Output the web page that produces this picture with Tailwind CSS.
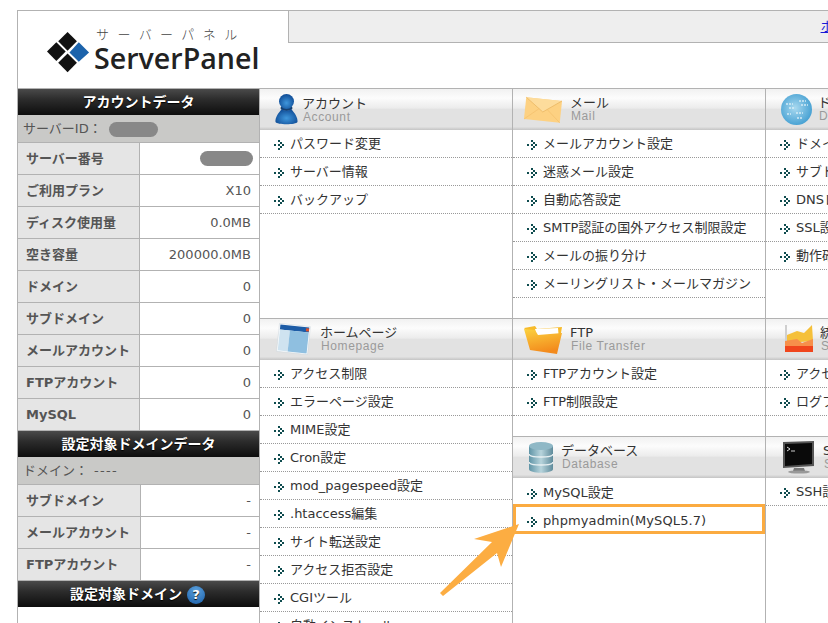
<!DOCTYPE html>
<html lang="ja">
<head>
    <meta charset="UTF-8">
    <title>ServerPanel</title>
    <script src="https://cdn.jsdelivr.net/npm/@tailwindcss/browser@4"></script>
</head>
<body class="w-[828px] h-[623px] overflow-hidden bg-white text-[13px] text-[#333] font-['DejaVu_Sans','Noto_Sans_CJK_JP',sans-serif]">

<svg class="hidden">
    <symbol id="bullet" viewBox="0 0 10 10" shape-rendering="crispEdges">
        <g fill="#0f4c4f">
            <rect x="0" y="4" width="2" height="2"/>
            <rect x="4" y="0" width="2" height="2"/>
            <rect x="6" y="2" width="2" height="2"/>
            <rect x="8" y="4" width="2" height="2"/>
            <rect x="6" y="6" width="2" height="2"/>
            <rect x="4" y="8" width="2" height="2"/>
            <rect x="4" y="4" width="2" height="2"/>
        </g>
    </symbol>
</svg>

<div class="relative w-[1100px] h-[640px] ml-[17px] mt-[10px] border-l border-t border-[#b2b2b2]">

    <!-- header -->
    <header class="flex h-[78px] border-b border-[#b2b2b2]">
        <div class="w-[270px] flex items-center pl-[29px] pt-[6px]">
            <svg class="w-[43px] h-[43px] shrink-0" viewBox="0 0 46 44">
                <polygon points="22,0 32,10 22,20 12,10" fill="#111"/>
                <polygon points="10,11 20,21 10,31 0,21" fill="#111"/>
                <polygon points="22,23 32,33 22,43 12,33" fill="#111"/>
                <polygon points="34,11 45,22 34,32 24,22" fill="#1c63ab"/>
            </svg>
            <div class="ml-[4px] mt-[-6px]">
                <div class="text-[13px] leading-[14px] mb-[2px] font-light tracking-[8.4px] text-[#444] pl-[2px] font-['Noto_Sans_CJK_JP',sans-serif] whitespace-nowrap">サーバーパネル</div>
                <div class="text-[28.6px] leading-[30px] font-semibold text-[#222] font-['Open_Sans',sans-serif]">ServerPanel</div>
            </div>
        </div>
        <div class="w-[830px] h-[32px] bg-[#eeeeee] border-l border-b border-[#b2b2b2] pl-[532px] pt-[6px]">
            <a href="#" class="text-[#1a1ad6] underline">ホーム</a>
        </div>
    </header>

    <div class="flex">
        <!-- sidebar -->
        <aside class="w-[242px] shrink-0 border-r border-[#b2b2b2] h-[560px] text-[#555]">
            <h2 class="h-[26px] flex items-center justify-center text-[14px] font-bold text-white bg-[linear-gradient(#4a4a4a,#2c2c2c_40%,#0d0d0d)] [text-shadow:0_1px_1px_#000]">アカウントデータ</h2>
            <div class="h-[27px] flex items-center pl-[5px] pt-[1px] bg-[#c9c9c7]">サーバーID：<span class="ml-[7px] w-[49px] h-[15px] rounded-full bg-[#888888]"></span></div>

            <div class="grid grid-cols-[122px_1fr] h-[32px] border-t border-[#b2b2b2]">
                <div class="bg-[#e5e5e5] border-r border-[#b2b2b2] font-bold flex items-center pl-[8px] pt-[1px]">サーバー番号</div>
                <div class="flex items-center justify-end pr-[6px]"><span class="w-[53px] h-[15px] rounded-full bg-[#888888]"></span></div>
            </div>
            <div class="grid grid-cols-[122px_1fr] h-[32px] border-t border-[#b2b2b2]">
                <div class="bg-[#e5e5e5] border-r border-[#b2b2b2] font-bold flex items-center pl-[8px] pt-[1px]">ご利用プラン</div>
                <div class="flex items-center justify-end pr-[8px] pt-[1px]">X10</div>
            </div>
            <div class="grid grid-cols-[122px_1fr] h-[32px] border-t border-[#b2b2b2]">
                <div class="bg-[#e5e5e5] border-r border-[#b2b2b2] font-bold flex items-center pl-[8px] pt-[1px]">ディスク使用量</div>
                <div class="flex items-center justify-end pr-[8px] pt-[1px]">0.0MB</div>
            </div>
            <div class="grid grid-cols-[122px_1fr] h-[32px] border-t border-[#b2b2b2]">
                <div class="bg-[#e5e5e5] border-r border-[#b2b2b2] font-bold flex items-center pl-[8px] pt-[1px]">空き容量</div>
                <div class="flex items-center justify-end pr-[8px] pt-[1px]">200000.0MB</div>
            </div>
            <div class="grid grid-cols-[122px_1fr] h-[32px] border-t border-[#b2b2b2]">
                <div class="bg-[#e5e5e5] border-r border-[#b2b2b2] font-bold flex items-center pl-[8px] pt-[1px]">ドメイン</div>
                <div class="flex items-center justify-end pr-[8px] pt-[1px]">0</div>
            </div>
            <div class="grid grid-cols-[122px_1fr] h-[32px] border-t border-[#b2b2b2]">
                <div class="bg-[#e5e5e5] border-r border-[#b2b2b2] font-bold flex items-center pl-[8px] pt-[1px]">サブドメイン</div>
                <div class="flex items-center justify-end pr-[8px] pt-[1px]">0</div>
            </div>
            <div class="grid grid-cols-[122px_1fr] h-[32px] border-t border-[#b2b2b2]">
                <div class="bg-[#e5e5e5] border-r border-[#b2b2b2] font-bold flex items-center pl-[8px] pt-[1px]">メールアカウント</div>
                <div class="flex items-center justify-end pr-[8px] pt-[1px]">0</div>
            </div>
            <div class="grid grid-cols-[122px_1fr] h-[32px] border-t border-[#b2b2b2]">
                <div class="bg-[#e5e5e5] border-r border-[#b2b2b2] font-bold flex items-center pl-[8px] pt-[1px]">FTPアカウント</div>
                <div class="flex items-center justify-end pr-[8px] pt-[1px]">0</div>
            </div>
            <div class="grid grid-cols-[122px_1fr] h-[32px] border-t border-[#b2b2b2]">
                <div class="bg-[#e5e5e5] border-r border-[#b2b2b2] font-bold flex items-center pl-[8px] pt-[1px]">MySQL</div>
                <div class="flex items-center justify-end pr-[8px] pt-[1px]">0</div>
            </div>

            <h2 class="h-[27px] border-t border-[#b2b2b2] flex items-center justify-center text-[14px] font-bold text-white bg-[linear-gradient(#4a4a4a,#2c2c2c_40%,#0d0d0d)] [text-shadow:0_1px_1px_#000]">設定対象ドメインデータ</h2>
            <div class="h-[27px] flex items-center pl-[5px] bg-[#c9c9c7]">ドメイン：<span class="ml-[6px] tracking-[1.3px]">----</span></div>

            <div class="grid grid-cols-[123px_1fr] h-[32px] border-t border-[#b2b2b2]">
                <div class="bg-[#e5e5e5] border-r border-[#b2b2b2] font-bold flex items-center pl-[8px] pt-[1px]">サブドメイン</div>
                <div class="flex items-center justify-end pr-[8px] pt-[1px]">-</div>
            </div>
            <div class="grid grid-cols-[123px_1fr] h-[32px] border-t border-[#b2b2b2]">
                <div class="bg-[#e5e5e5] border-r border-[#b2b2b2] font-bold flex items-center pl-[8px] pt-[1px]">メールアカウント</div>
                <div class="flex items-center justify-end pr-[8px] pt-[1px]">-</div>
            </div>
            <div class="grid grid-cols-[123px_1fr] h-[32px] border-t border-[#b2b2b2]">
                <div class="bg-[#e5e5e5] border-r border-[#b2b2b2] font-bold flex items-center pl-[8px] pt-[1px]">FTPアカウント</div>
                <div class="flex items-center justify-end pr-[8px] pt-[1px]">-</div>
            </div>

            <h2 class="h-[27px] border-t border-[#b2b2b2] pt-[1px] pr-[2px] flex items-center justify-center gap-[5px] text-[14px] font-bold text-white bg-[linear-gradient(#4a4a4a,#2c2c2c_40%,#0d0d0d)] [text-shadow:0_1px_1px_#000]">
                設定対象ドメイン
                <span class="w-[18px] h-[18px] rounded-full bg-[radial-gradient(circle_at_50%_25%,#5aa0dc,#1a5ea8)] flex items-center justify-center text-[13px] leading-none">?</span>
            </h2>
        </aside>

        <!-- column 1 -->
        <div class="w-[253px] shrink-0 border-r border-[#b2b2b2]">
            <section class="h-[230px] border-b border-[#b2b2b2]">
                <div class="h-[41px] flex items-center relative pl-[42px] bg-[linear-gradient(#f1f1f1,#fcfcfc_22%,#ececec_46%,#e2e2e2_50%,#e2e2e2_92%,#c4c4c4)]">
                    <svg class="absolute left-[15px] top-[5px] w-[23px] h-[31px]" viewBox="0 0 23 31">
                        <defs>
                            <radialGradient id="acc" cx="50%" cy="60%" r="60%"><stop offset="0" stop-color="#3f97dc"/><stop offset="1" stop-color="#0e4a94"/></radialGradient>
                        </defs>
                        <ellipse cx="11.5" cy="14" rx="6" ry="3" fill="#16406f"/>
                        <ellipse cx="11.5" cy="7.5" rx="7.5" ry="7.5" fill="url(#acc)"/>
                        <path d="M7 15 C9 17 14 17 16 15 C20 19 23 24 22.5 28 C21 31 2 31 .5 28 C0 24 3 19 7 15 Z" fill="url(#acc)"/>
                    </svg>
                    <div>
                        <div class="text-[13px] leading-[15px]">アカウント</div>
                        <div class="text-[12px] leading-[13px] text-[#9a9a9a] tracking-[.6px] font-['Liberation_Sans',sans-serif] pl-[1px]">Account</div>
                    </div>
                </div>
                <ul>
                    <li class="h-[28px] flex items-center border-b border-dotted border-[#999] pl-[14px] gap-[6px]"><svg class="w-[10px] h-[10px] mt-[2px]"><use href="#bullet"/></svg>パスワード変更</li>
                    <li class="h-[28px] flex items-center border-b border-dotted border-[#999] pl-[14px] gap-[6px]"><svg class="w-[10px] h-[10px] mt-[2px]"><use href="#bullet"/></svg>サーバー情報</li>
                    <li class="h-[28px] flex items-center border-b border-dotted border-[#999] pl-[14px] gap-[6px]"><svg class="w-[10px] h-[10px] mt-[2px]"><use href="#bullet"/></svg>バックアップ</li>
                </ul>
            </section>
            <section>
                <div class="h-[41px] flex items-center relative pl-[60px] pb-[1px] bg-[linear-gradient(#f1f1f1,#fcfcfc_22%,#ececec_46%,#e2e2e2_50%,#e2e2e2_92%,#c4c4c4)]">
                    <svg class="absolute left-[16px] top-[3px] w-[36px] h-[35px]" viewBox="0 0 36 35">
                        <g transform="rotate(6 18 17)">
                            <rect x="2" y="3" width="31" height="28" fill="#fff" stroke="#c8d4dc" stroke-width=".5"/>
                            <rect x="3" y="4" width="29" height="5" fill="#1d5ca6"/>
                            <rect x="3" y="9" width="10" height="21" fill="#cfe3f0"/>
                            <rect x="13" y="9" width="19" height="21" fill="#8fbfe0"/>
                            <rect x="29" y="5" width="3" height="3" fill="#e0502a"/>
                        </g>
                    </svg>
                    <div>
                        <div class="text-[13px] leading-[15px]">ホームページ</div>
                        <div class="text-[12px] leading-[13px] text-[#9a9a9a] tracking-[.6px] font-['Liberation_Sans',sans-serif] pl-[1px]">Homepage</div>
                    </div>
                </div>
                <ul>
                    <li class="h-[28px] flex items-center border-b border-dotted border-[#999] pl-[14px] gap-[6px]"><svg class="w-[10px] h-[10px] mt-[2px]"><use href="#bullet"/></svg>アクセス制限</li>
                    <li class="h-[28px] flex items-center border-b border-dotted border-[#999] pl-[14px] gap-[6px]"><svg class="w-[10px] h-[10px] mt-[2px]"><use href="#bullet"/></svg>エラーページ設定</li>
                    <li class="h-[28px] flex items-center border-b border-dotted border-[#999] pl-[14px] gap-[6px]"><svg class="w-[10px] h-[10px] mt-[2px]"><use href="#bullet"/></svg>MIME設定</li>
                    <li class="h-[28px] flex items-center border-b border-dotted border-[#999] pl-[14px] gap-[6px]"><svg class="w-[10px] h-[10px] mt-[2px]"><use href="#bullet"/></svg>Cron設定</li>
                    <li class="h-[28px] flex items-center border-b border-dotted border-[#999] pl-[14px] gap-[6px]"><svg class="w-[10px] h-[10px] mt-[2px]"><use href="#bullet"/></svg>mod_pagespeed設定</li>
                    <li class="h-[28px] flex items-center border-b border-dotted border-[#999] pl-[14px] gap-[6px]"><svg class="w-[10px] h-[10px] mt-[2px]"><use href="#bullet"/></svg>.htaccess編集</li>
                    <li class="h-[28px] flex items-center border-b border-dotted border-[#999] pl-[14px] gap-[6px]"><svg class="w-[10px] h-[10px] mt-[2px]"><use href="#bullet"/></svg>サイト転送設定</li>
                    <li class="h-[28px] flex items-center border-b border-dotted border-[#999] pl-[14px] gap-[6px]"><svg class="w-[10px] h-[10px] mt-[2px]"><use href="#bullet"/></svg>アクセス拒否設定</li>
                    <li class="h-[28px] flex items-center border-b border-dotted border-[#999] pl-[14px] gap-[6px]"><svg class="w-[10px] h-[10px] mt-[2px]"><use href="#bullet"/></svg>CGIツール</li>
                    <li class="h-[28px] flex items-center border-b border-dotted border-[#999] pl-[14px] gap-[6px]"><svg class="w-[10px] h-[10px] mt-[2px]"><use href="#bullet"/></svg>自動インストール</li>
                </ul>
            </section>
        </div>

        <!-- column 2 -->
        <div class="w-[253px] shrink-0 border-r border-[#b2b2b2]">
            <section class="h-[230px] border-b border-[#b2b2b2]">
                <div class="h-[41px] flex items-center relative pl-[57px] pb-[2px] bg-[linear-gradient(#f1f1f1,#fcfcfc_22%,#ececec_46%,#e2e2e2_50%,#e2e2e2_92%,#c4c4c4)]">
                    <svg class="absolute left-[11px] top-[6px] w-[38px] h-[30px]" viewBox="0 0 38 30">
                        <g transform="rotate(6 19 15)">
                            <rect x="1" y="4" width="36" height="22" fill="#fdd182"/>
                            <path d="M1 4 L19 17 L37 4" fill="#fddc9c" stroke="#e8b45f" stroke-width=".7"/>
                            <path d="M1 26 L15 14 M37 26 L23 14" stroke="#f4c06c" stroke-width=".7" fill="none"/>
                        </g>
                    </svg>
                    <div>
                        <div class="text-[13px] leading-[15px]">メール</div>
                        <div class="text-[12px] leading-[13px] text-[#9a9a9a] tracking-[.6px] font-['Liberation_Sans',sans-serif] pl-[1px]">Mail</div>
                    </div>
                </div>
                <ul>
                    <li class="h-[28px] flex items-center border-b border-dotted border-[#999] pl-[14px] gap-[6px]"><svg class="w-[10px] h-[10px] mt-[2px]"><use href="#bullet"/></svg>メールアカウント設定</li>
                    <li class="h-[28px] flex items-center border-b border-dotted border-[#999] pl-[14px] gap-[6px]"><svg class="w-[10px] h-[10px] mt-[2px]"><use href="#bullet"/></svg>迷惑メール設定</li>
                    <li class="h-[28px] flex items-center border-b border-dotted border-[#999] pl-[14px] gap-[6px]"><svg class="w-[10px] h-[10px] mt-[2px]"><use href="#bullet"/></svg>自動応答設定</li>
                    <li class="h-[28px] flex items-center border-b border-dotted border-[#999] pl-[14px] gap-[6px]"><svg class="w-[10px] h-[10px] mt-[2px]"><use href="#bullet"/></svg>SMTP認証の国外アクセス制限設定</li>
                    <li class="h-[28px] flex items-center border-b border-dotted border-[#999] pl-[14px] gap-[6px]"><svg class="w-[10px] h-[10px] mt-[2px]"><use href="#bullet"/></svg>メールの振り分け</li>
                    <li class="h-[28px] flex items-center border-b border-dotted border-[#999] pl-[14px] gap-[6px]"><svg class="w-[10px] h-[10px] mt-[2px]"><use href="#bullet"/></svg>メーリングリスト・メールマガジン</li>
                </ul>
            </section>
            <section class="h-[118px] border-b border-[#b2b2b2]">
                <div class="h-[41px] flex items-center relative pl-[57px] pb-[1px] bg-[linear-gradient(#f1f1f1,#fcfcfc_22%,#ececec_46%,#e2e2e2_50%,#e2e2e2_92%,#c4c4c4)]">
                    <svg class="absolute left-[10px] top-[5px] w-[40px] h-[32px]" viewBox="0 0 40 32">
                        <defs>
                            <linearGradient id="fld" x1="0" y1="0" x2=".3" y2="1"><stop offset="0" stop-color="#fbd23f"/><stop offset="1" stop-color="#f38a1c"/></linearGradient>
                        </defs>
                        <path d="M1 4 L12 2 L14 5 L39 3 L36 20 L33 9 L6 9 Z" fill="#f7bb2c"/>
                        <path d="M12 5 L35 4 L36 16 L14 14 Z" fill="#fff"/>
                        <path d="M1 5 L12 6 L15 11 L39 9 L34 30 L7 26 Z" fill="url(#fld)"/>
                    </svg>
                    <div>
                        <div class="text-[13px] leading-[15px]">FTP</div>
                        <div class="text-[12px] leading-[13px] text-[#9a9a9a] tracking-[.6px] font-['Liberation_Sans',sans-serif] pl-[1px]">File Transfer</div>
                    </div>
                </div>
                <ul>
                    <li class="h-[28px] flex items-center border-b border-dotted border-[#999] pl-[14px] gap-[6px]"><svg class="w-[10px] h-[10px] mt-[2px]"><use href="#bullet"/></svg>FTPアカウント設定</li>
                    <li class="h-[28px] flex items-center border-b border-dotted border-[#999] pl-[14px] gap-[6px]"><svg class="w-[10px] h-[10px] mt-[2px]"><use href="#bullet"/></svg>FTP制限設定</li>
                </ul>
            </section>
            <section>
                <div class="h-[41px] flex items-center relative pl-[48px] pb-[1px] bg-[linear-gradient(#f1f1f1,#fcfcfc_22%,#ececec_46%,#e2e2e2_50%,#e2e2e2_92%,#c4c4c4)]">
                    <svg class="absolute left-[16px] top-[5px] w-[24px] h-[31px]" viewBox="0 0 24 31">
                        <defs>
                            <linearGradient id="dbg" x1="0" x2="1" y1="0" y2="0"><stop offset="0" stop-color="#5f94a6"/><stop offset=".5" stop-color="#b7d4dc"/><stop offset="1" stop-color="#5f8b9b"/></linearGradient>
                        </defs>
                        <path d="M0 4 V27 C0 32 24 32 24 27 V4 Z" fill="url(#dbg)"/>
                        <ellipse cx="12" cy="4" rx="12" ry="4" fill="#8fb8c6"/>
                        <path d="M0 12 C0 16 24 16 24 12 M0 20 C0 24 24 24 24 20" fill="none" stroke="#e8f0f2" stroke-width="1.4"/>
                    </svg>
                    <div>
                        <div class="text-[13px] leading-[15px]">データベース</div>
                        <div class="text-[12px] leading-[13px] text-[#9a9a9a] tracking-[.6px] font-['Liberation_Sans',sans-serif] pl-[1px]">Database</div>
                    </div>
                </div>
                <ul>
                    <li class="h-[28px] flex items-center pl-[14px] pt-[1px] gap-[6px]"><svg class="w-[10px] h-[10px] mt-[2px]"><use href="#bullet"/></svg>MySQL設定</li>
                    <li class="relative h-[28px] flex items-center pl-[14px] pt-[1px] gap-[6px]"><svg class="w-[10px] h-[10px] mt-[2px]"><use href="#bullet"/></svg><span class="tracking-[.1px]">phpmyadmin(MySQL5.7)</span>
                        <span class="absolute left-0 right-0 top-[-2px] bottom-0 border-[3px] border-[#fbab40]"></span>
                    </li>
                </ul>
            </section>
        </div>

        <!-- column 3 -->
        <div class="w-[253px] shrink-0">
            <section class="h-[230px] border-b border-[#b2b2b2]">
                <div class="h-[41px] flex items-center relative pl-[52px] pb-[2px] bg-[linear-gradient(#f1f1f1,#fcfcfc_22%,#ececec_46%,#e2e2e2_50%,#e2e2e2_92%,#c4c4c4)]">
                    <svg class="absolute left-[15px] top-[5px] w-[31px] h-[31px]" viewBox="0 0 31 31">
                        <defs>
                            <radialGradient id="glb" cx="45%" cy="45%" r="55%"><stop offset="0" stop-color="#a9d9ef"/><stop offset="1" stop-color="#4aa3d4"/></radialGradient>
                        </defs>
                        <circle cx="15.5" cy="15.5" r="15.5" fill="url(#glb)"/>
                        <path d="M5 10 H12 M8 14 H14 M18 7 H25 M20 11 H27 M15 19 H22 M6 20 H10 M16 24 H21" stroke="#e4f3fa" stroke-width="1.6" stroke-dasharray="2 1" opacity=".85"/>
                    </svg>
                    <div>
                        <div class="text-[13px] leading-[15px] whitespace-nowrap">ドメイン</div>
                        <div class="text-[12px] leading-[13px] text-[#9a9a9a] tracking-[.6px] font-['Liberation_Sans',sans-serif] pl-[1px]">Domain</div>
                    </div>
                </div>
                <ul>
                    <li class="h-[28px] flex items-center border-b border-dotted border-[#999] pl-[14px] gap-[6px]"><svg class="w-[10px] h-[10px] mt-[2px]"><use href="#bullet"/></svg>ドメイン設定</li>
                    <li class="h-[28px] flex items-center border-b border-dotted border-[#999] pl-[14px] gap-[6px]"><svg class="w-[10px] h-[10px] mt-[2px]"><use href="#bullet"/></svg>サブドメイン設定</li>
                    <li class="h-[28px] flex items-center border-b border-dotted border-[#999] pl-[14px] gap-[6px]"><svg class="w-[10px] h-[10px] mt-[2px]"><use href="#bullet"/></svg>DNSレコード設定</li>
                    <li class="h-[28px] flex items-center border-b border-dotted border-[#999] pl-[14px] gap-[6px]"><svg class="w-[10px] h-[10px] mt-[2px]"><use href="#bullet"/></svg>SSL設定</li>
                    <li class="h-[28px] flex items-center border-b border-dotted border-[#999] pl-[14px] gap-[6px]"><svg class="w-[10px] h-[10px] mt-[2px]"><use href="#bullet"/></svg>動作確認URL</li>
                </ul>
            </section>
            <section class="h-[118px] border-b border-[#b2b2b2]">
                <div class="h-[41px] flex items-center relative pl-[54px] pb-[1px] bg-[linear-gradient(#f1f1f1,#fcfcfc_22%,#ececec_46%,#e2e2e2_50%,#e2e2e2_92%,#c4c4c4)]">
                    <svg class="absolute left-[16px] top-[4px] w-[33px] h-[32px]" viewBox="0 0 33 32">
                        <path d="M3 2 L5 2 L5 28 L3 28 Z" fill="#cfcfcf"/>
                        <path d="M5 12 L15 8 L22 10 L30 2 L31 18 L5 20 Z" fill="#f5c03a"/>
                        <path d="M3 18 L15 16 L20 20 L31 16 L31 23 L3 23 Z" fill="#f78f4a"/>
                        <path d="M3 23 H31 V29 H3 Z" fill="#f0451c"/>
                    </svg>
                    <div>
                        <div class="text-[13px] leading-[15px] whitespace-nowrap">統計</div>
                        <div class="text-[12px] leading-[13px] text-[#9a9a9a] tracking-[.6px] font-['Liberation_Sans',sans-serif] pl-[1px]">Statistics</div>
                    </div>
                </div>
                <ul>
                    <li class="h-[28px] flex items-center border-b border-dotted border-[#999] pl-[14px] gap-[6px]"><svg class="w-[10px] h-[10px] mt-[2px]"><use href="#bullet"/></svg>アクセス解析</li>
                    <li class="h-[28px] flex items-center border-b border-dotted border-[#999] pl-[14px] gap-[6px]"><svg class="w-[10px] h-[10px] mt-[2px]"><use href="#bullet"/></svg>ログファイル</li>
                </ul>
            </section>
            <section>
                <div class="h-[41px] flex items-center relative pl-[57px] pb-[1px] bg-[linear-gradient(#f1f1f1,#fcfcfc_22%,#ececec_46%,#e2e2e2_50%,#e2e2e2_92%,#c4c4c4)]">
                    <svg class="absolute left-[16px] top-[4px] w-[33px] h-[33px]" viewBox="0 0 33 33">
                        <path d="M1 1 L32 0 L32 25 L1 27 Z" fill="#555"/>
                        <path d="M3 3 L30 2 L30 23 L3 25 Z" fill="#0a0a0a"/>
                        <path d="M5 6 L8 8 L5 10" fill="none" stroke="#ddd" stroke-width="1"/>
                        <path d="M9 10 H13" stroke="#ccc" stroke-width="1"/>
                        <path d="M12 27 H22 L23 30 H11 Z" fill="#777"/>
                        <ellipse cx="17" cy="31" rx="11" ry="1.6" fill="#999"/>
                    </svg>
                    <div>
                        <div class="text-[13px] leading-[15px] whitespace-nowrap">SSH</div>
                        <div class="text-[12px] leading-[13px] text-[#9a9a9a] tracking-[.6px] font-['Liberation_Sans',sans-serif] pl-[1px]">Secure Shell</div>
                    </div>
                </div>
                <ul>
                    <li class="h-[28px] flex items-center border-b border-dotted border-[#999] pl-[14px] pt-[1px] gap-[6px]"><svg class="w-[10px] h-[10px] mt-[2px]"><use href="#bullet"/></svg>SSH設定</li>
                </ul>
            </section>
        </div>
    </div>

    <!-- annotation arrow -->
    <svg class="absolute left-[422px] top-[513px] w-[80px] h-[76px]" viewBox="0 0 80 76">
        <polygon points="79,0 61,43 57,29 3,72 0,69 52,18 34,15" fill="#fcad42"/>
    </svg>
</div>

</body>
</html>
